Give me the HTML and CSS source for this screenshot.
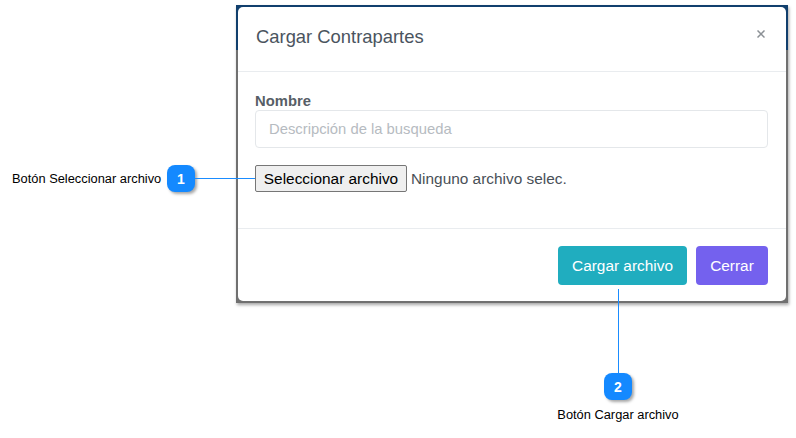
FILE: index.html
```html
<!DOCTYPE html>
<html lang="es">
<head>
<meta charset="utf-8">
<title>Cargar Contrapartes</title>
<link rel="stylesheet" href="styles.css">
</head>
<body>
<div class="canvas">
  <div class="modal-frame">
    <div class="modal">
      <div class="modal-header">
        <h5 class="modal-title">Cargar Contrapartes</h5>
        <button class="close" type="button" aria-label="Close">
          <svg width="8" height="8" viewBox="0 0 8 8"><path d="M0.5 0.5 L7.5 7.5 M7.5 0.5 L0.5 7.5" stroke="#8b9095" stroke-width="1.5" fill="none"/></svg>
        </button>
      </div>
      <div class="modal-body">
        <label class="field-label">Nombre</label>
        <input class="field-input" type="text" placeholder="Descripción de la busqueda">
        <div class="file-row">
          <span class="file-btn">Seleccionar archivo</span>
          <span class="file-name">Ninguno archivo selec.</span>
        </div>
      </div>
      <div class="modal-footer">
        <button class="btn btn-info" type="button">Cargar archivo</button>
        <button class="btn btn-purple" type="button">Cerrar</button>
      </div>
    </div>
  </div>

  <div class="callout-label label-1">Botón Seleccionar archivo</div>
  <div class="badge badge-1">1</div>
  <div class="lead lead-1"></div>

  <div class="lead lead-2"></div>
  <div class="badge badge-2">2</div>
  <div class="callout-label label-2">Botón Cargar archivo</div>
</div>
</body>
</html>
```

FILE: styles.css
```css
html, body {
  margin: 0;
  background: #ffffff;
}

body {
  font-family: "Liberation Sans", Arial, sans-serif;
}

.canvas {
  position: relative;
  width: 796px;
  height: 438px;
  padding: 5px 0 0 236px;
  box-sizing: border-box;
  overflow: hidden;
}

.modal-frame {
  width: 552px;
  padding: 2px;
  box-sizing: border-box;
  background: linear-gradient(to bottom, #113f6d 0, #113f6d 45px, #707070 45px, #707070 100%);
  box-shadow: 1px 2px 3px rgba(0, 0, 0, 0.35);
}

.modal {
  background: #ffffff;
  border-radius: 5px;
  display: flex;
  flex-direction: column;
}

.modal-header {
  height: 65px;
  box-sizing: border-box;
  border-bottom: 1px solid #e9ecef;
  padding: 19px 18px 0 18px;
  display: flex;
  justify-content: space-between;
  align-items: flex-start;
}

.modal-title {
  margin: 0;
  font-size: 18.4px;
  line-height: 22px;
  font-weight: 400;
  color: #4a545e;
}

.close {
  margin: 4px 3px 0 0;
  padding: 0;
  border: 0;
  background: none;
  width: 8px;
  height: 8px;
  display: flex;
}

.modal-body {
  padding: 20px 18px 36px 17px;
  display: flex;
  flex-direction: column;
}

.field-label {
  display: block;
  font-size: 14.8px;
  line-height: 18px;
  font-weight: 700;
  color: #575e66;
}

.field-input {
  margin: 0;
  height: 38px;
  box-sizing: border-box;
  border: 1px solid #e4e7ea;
  border-radius: 4px;
  padding: 0 13px;
  font-family: "Liberation Sans", Arial, sans-serif;
  font-size: 14.8px;
  color: #495057;
  outline: none;
}

.field-input::placeholder {
  color: #b6bbc1;
}

.file-row {
  margin-top: 17px;
  display: flex;
  align-items: center;
  height: 27px;
}

.file-btn {
  width: 152px;
  height: 27px;
  box-sizing: border-box;
  border: 1px solid #767676;
  border-radius: 2px;
  background: #efefef;
  font-size: 15.4px;
  line-height: 25px;
  text-align: center;
  color: #000000;
}

.file-name {
  margin-left: 4px;
  font-size: 15.4px;
  color: #495057;
}

.modal-footer {
  border-top: 1px solid #e9ecef;
  padding: 17px 18px 16px;
  display: flex;
  justify-content: flex-end;
  gap: 9px;
}

.btn {
  height: 39px;
  padding: 0 14px;
  border: 0;
  border-radius: 4px;
  font-family: "Liberation Sans", Arial, sans-serif;
  font-size: 15.4px;
  color: #ffffff;
}

.btn-info {
  width: 129px;
  background: #20adbf;
}

.btn-purple {
  width: 72px;
  background: #7461ee;
}

.badge {
  position: absolute;
  width: 28px;
  height: 27px;
  border-radius: 8px;
  background: #1489ff;
  color: #ffffff;
  font-size: 14px;
  font-weight: 700;
  display: flex;
  align-items: center;
  justify-content: center;
  box-shadow: 2px 2px 3px rgba(0, 0, 0, 0.35);
}

.badge-1 {
  left: 167px;
  top: 165px;
}

.badge-2 {
  left: 604px;
  top: 373px;
}

.lead {
  position: absolute;
  background: #1a8cff;
}

.lead-1 {
  left: 195px;
  top: 178px;
  width: 60px;
  height: 1px;
}

.lead-2 {
  left: 618px;
  top: 289px;
  width: 1px;
  height: 84px;
}

.callout-label {
  position: absolute;
  font-size: 12.85px;
  line-height: 15px;
  color: #000000;
  white-space: nowrap;
}

.label-1 {
  left: 12px;
  top: 171px;
}

.label-2 {
  left: 518px;
  width: 200px;
  top: 407px;
  text-align: center;
}
```
